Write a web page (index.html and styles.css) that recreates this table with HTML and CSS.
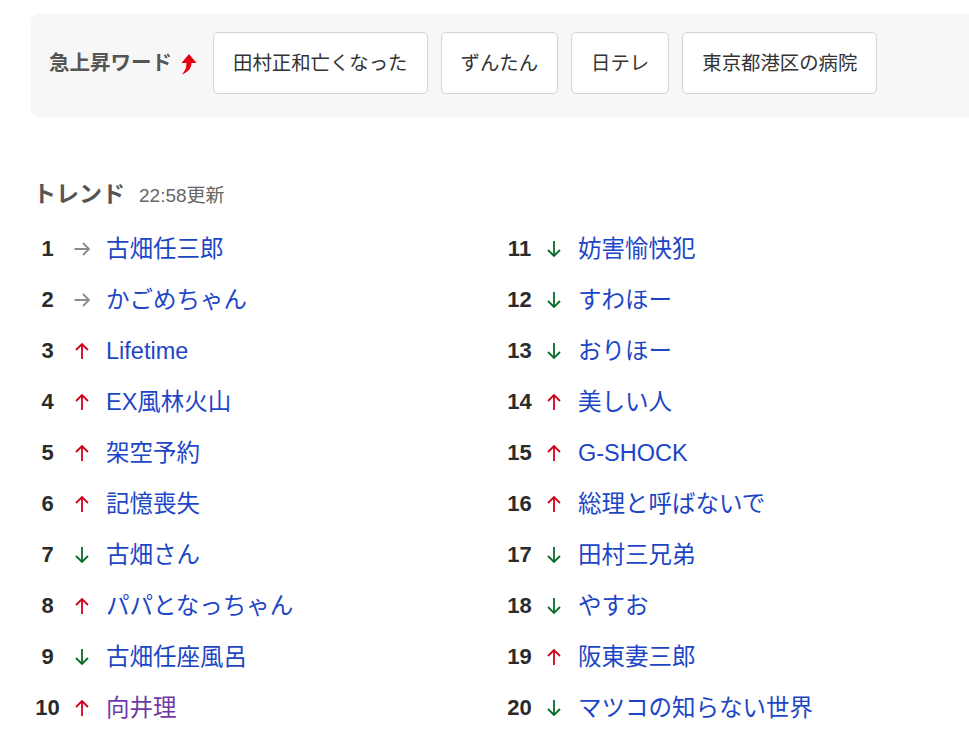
FILE: index.html
```html
<!DOCTYPE html>
<html lang="ja">
<head>
    <meta charset="UTF-8">
    <meta name="viewport" content="width=device-width, initial-scale=1.0">
    <title>トレンド</title>
    <link rel="stylesheet" href="styles.css">
</head>
<body>
    <div class="page">
        <div class="rising">
            <div class="rising-label">
                急上昇ワード
                <svg class="rising-icon" width="20" height="22" viewBox="0 0 20 22">
                    <path d="M12 1 L19.5 10 L14.5 10 C14.5 15 11.5 19 5 21.5 C8.5 17.5 9.5 14 9.5 10 L4.5 10 Z" fill="#e60012"/>
                </svg>
            </div>
            <a class="word" href="#">田村正和亡くなった</a>
            <a class="word" href="#">ずんたん</a>
            <a class="word" href="#">日テレ</a>
            <a class="word" href="#">東京都港区の病院</a>
        </div>

        <div class="trend-head">
            <h2>トレンド</h2>
            <span class="updated">22:58更新</span>
        </div>

        <svg width="0" height="0" class="defs">
            <symbol id="i-same" viewBox="0 0 18 18"><path d="M1.5 9 H16 M10 3 L16 9 L10 15" fill="none" stroke="currentColor" stroke-width="1.8"/></symbol>
            <symbol id="i-up" viewBox="0 0 18 18"><path d="M9 17 V2 M3 8 L9 2 L15 8" fill="none" stroke="currentColor" stroke-width="1.8"/></symbol>
            <symbol id="i-down" viewBox="0 0 18 18"><path d="M9 1 V16 M3 10 L9 16 L15 10" fill="none" stroke="currentColor" stroke-width="1.8"/></symbol>
        </svg>

        <div class="trend-list">
            <ol class="col">
                <li><span class="rank">1</span><svg class="arrow same"><use href="#i-same"/></svg><a href="#">古畑任三郎</a></li>
                <li><span class="rank">2</span><svg class="arrow same"><use href="#i-same"/></svg><a href="#">かごめちゃん</a></li>
                <li><span class="rank">3</span><svg class="arrow up"><use href="#i-up"/></svg><a href="#">Lifetime</a></li>
                <li><span class="rank">4</span><svg class="arrow up"><use href="#i-up"/></svg><a href="#">EX風林火山</a></li>
                <li><span class="rank">5</span><svg class="arrow up"><use href="#i-up"/></svg><a href="#">架空予約</a></li>
                <li><span class="rank">6</span><svg class="arrow up"><use href="#i-up"/></svg><a href="#">記憶喪失</a></li>
                <li><span class="rank">7</span><svg class="arrow down"><use href="#i-down"/></svg><a href="#">古畑さん</a></li>
                <li><span class="rank">8</span><svg class="arrow up"><use href="#i-up"/></svg><a href="#">パパとなっちゃん</a></li>
                <li><span class="rank">9</span><svg class="arrow down"><use href="#i-down"/></svg><a href="#">古畑任座風呂</a></li>
                <li><span class="rank">10</span><svg class="arrow up"><use href="#i-up"/></svg><a class="visited" href="#">向井理</a></li>
            </ol>
            <ol class="col">
                <li><span class="rank">11</span><svg class="arrow down"><use href="#i-down"/></svg><a href="#">妨害愉快犯</a></li>
                <li><span class="rank">12</span><svg class="arrow down"><use href="#i-down"/></svg><a href="#">すわほー</a></li>
                <li><span class="rank">13</span><svg class="arrow down"><use href="#i-down"/></svg><a href="#">おりほー</a></li>
                <li><span class="rank">14</span><svg class="arrow up"><use href="#i-up"/></svg><a href="#">美しい人</a></li>
                <li><span class="rank">15</span><svg class="arrow up"><use href="#i-up"/></svg><a href="#">G-SHOCK</a></li>
                <li><span class="rank">16</span><svg class="arrow up"><use href="#i-up"/></svg><a href="#">総理と呼ばないで</a></li>
                <li><span class="rank">17</span><svg class="arrow down"><use href="#i-down"/></svg><a href="#">田村三兄弟</a></li>
                <li><span class="rank">18</span><svg class="arrow down"><use href="#i-down"/></svg><a href="#">やすお</a></li>
                <li><span class="rank">19</span><svg class="arrow up"><use href="#i-up"/></svg><a href="#">阪東妻三郎</a></li>
                <li><span class="rank">20</span><svg class="arrow down"><use href="#i-down"/></svg><a href="#">マツコの知らない世界</a></li>
            </ol>
        </div>
    </div>
</body>
</html>
```

FILE: styles.css
```css
body {
    margin: 0;
    background: #fff;
    font-family: "Liberation Sans", "Noto Sans CJK JP", sans-serif;
    color: #333;
}
a {
    text-decoration: none;
}
.defs {
    position: absolute;
}
.page {
    padding: 14px 0 0 31px;
}
.rising {
    display: flex;
    align-items: center;
    gap: 13px;
    height: 103px;
    box-sizing: border-box;
    padding: 0 18px 6px;
    background-color: #f7f7f7;
    border-radius: 8px 0 0 8px;
}
.rising-label {
    display: flex;
    align-items: center;
    gap: 5px;
    margin-right: 3px;
    font-size: 20.5px;
    font-weight: bold;
    color: #555;
    line-height: 30px;
}
.rising-icon {
    margin-top: 2px;
}
.word {
    display: flex;
    align-items: center;
    height: 62px;
    box-sizing: border-box;
    padding: 0 19px;
    background: #fff;
    border: 1px solid #d4d4d4;
    border-radius: 5px;
    font-size: 19.4px;
    line-height: 30px;
    color: #333;
}
.trend-head {
    display: flex;
    align-items: baseline;
    gap: 14px;
    margin: 62px 0 0 2px;
    line-height: 30px;
}
.trend-head h2 {
    margin: 0;
    font-size: 23px;
    color: #555;
}
.updated {
    font-size: 19px;
    color: #666;
}
.trend-list {
    display: grid;
    grid-template-columns: 472px 1fr;
    margin-top: 12px;
}
.col {
    list-style: none;
    margin: 0;
    padding: 0 0 0 2px;
}
.col li {
    display: flex;
    align-items: center;
    height: 51px;
}
.rank {
    width: 29px;
    text-align: center;
    font-size: 22px;
    line-height: 30px;
    font-weight: bold;
    color: #2b2b2b;
}
.arrow {
    width: 18px;
    height: 18px;
    margin: 0 15px 0 11px;
}
.arrow.same {
    color: #8c8c8c;
}
.arrow.up {
    color: #d0021b;
}
.arrow.down {
    color: #0b6b2b;
}
.col a {
    font-size: 23.5px;
    line-height: 30px;
    color: #1d46c6;
}
.col a.visited {
    color: #6f3aa6;
}
```
